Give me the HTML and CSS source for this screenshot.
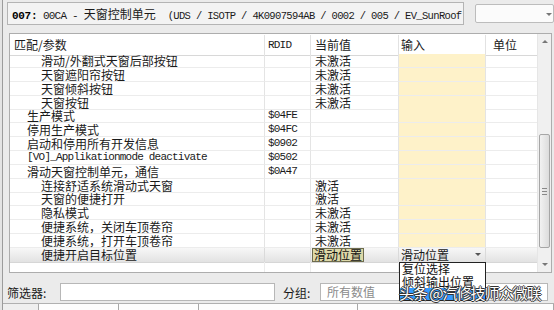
FILE: index.html
```html
<!DOCTYPE html>
<html>
<head>
<meta charset="utf-8">
<link rel="stylesheet" href="styles.css">
</head>
<body>
<div class="win">
  <div class="topbar">
    <div class="title"><b class="lat bold">007:</b><span class="lat"> 00CA - </span>天窗控制单元<span class="lat gap">(UDS / ISOTP / 4K0907594AB / 0002 / 005 / EV_SunRoof</span></div>
    <div class="combo"><span class="arrow"></span></div>
  </div>
  <div class="panel">
    <div class="grid">
      <div class="row head"><div class="c1">匹配/参数</div><div class="c2 lat">RDID</div><div class="c3">当前值</div><div class="c4">输入</div><div class="c5">单位</div></div>
      <div class="row"><div class="c1 l1">滑动/外翻式天窗后部按钮</div><div class="c2"></div><div class="c3">未激活</div><div class="c4 inp"></div><div class="c5"></div></div>
      <div class="row"><div class="c1 l1">天窗遮阳帘按钮</div><div class="c2"></div><div class="c3">未激活</div><div class="c4 inp"></div><div class="c5"></div></div>
      <div class="row"><div class="c1 l1">天窗倾斜按钮</div><div class="c2"></div><div class="c3">未激活</div><div class="c4 inp"></div><div class="c5"></div></div>
      <div class="row"><div class="c1 l1">天窗按钮</div><div class="c2"></div><div class="c3">未激活</div><div class="c4 inp"></div><div class="c5"></div></div>
      <div class="row"><div class="c1 l0">生产模式</div><div class="c2 lat">$04FE</div><div class="c3"></div><div class="c4 inp"></div><div class="c5"></div></div>
      <div class="row"><div class="c1 l0">停用生产模式</div><div class="c2 lat">$04FC</div><div class="c3"></div><div class="c4 inp"></div><div class="c5"></div></div>
      <div class="row"><div class="c1 l0">启动和停用所有开发信息</div><div class="c2 lat">$0902</div><div class="c3"></div><div class="c4 inp"></div><div class="c5"></div></div>
      <div class="row"><div class="c1 l0 lat">[VO]_Applikationmode deactivate</div><div class="c2 lat">$0502</div><div class="c3"></div><div class="c4 inp"></div><div class="c5"></div></div>
      <div class="row"><div class="c1 l0">滑动天窗控制单元，通信</div><div class="c2 lat">$0A47</div><div class="c3"></div><div class="c4 inp"></div><div class="c5"></div></div>
      <div class="row"><div class="c1 l1">连接舒适系统滑动式天窗</div><div class="c2"></div><div class="c3">激活</div><div class="c4 inp"></div><div class="c5"></div></div>
      <div class="row"><div class="c1 l1">天窗的便捷打开</div><div class="c2"></div><div class="c3">激活</div><div class="c4 inp"></div><div class="c5"></div></div>
      <div class="row"><div class="c1 l1">隐私模式</div><div class="c2"></div><div class="c3">未激活</div><div class="c4 inp"></div><div class="c5"></div></div>
      <div class="row"><div class="c1 l1">便捷系统，关闭车顶卷帘</div><div class="c2"></div><div class="c3">未激活</div><div class="c4 inp"></div><div class="c5"></div></div>
      <div class="row"><div class="c1 l1">便捷系统，打开车顶卷帘</div><div class="c2"></div><div class="c3">未激活</div><div class="c4 inp"></div><div class="c5"></div></div>
      <div class="row sel"><div class="c1 l1">便捷开启目标位置</div><div class="c2"></div><div class="c3"><span class="selval">滑动位置</span></div><div class="c4 dd"><span>滑动位置</span><span class="ddarrow"></span></div><div class="c5"></div></div>
      <div class="row filler"><div class="c1"></div><div class="c2"></div><div class="c3"></div><div class="c4"></div><div class="c5"></div></div>
    </div>
    <div class="vscroll">
      <div class="sbtn"><span class="up"></span></div>
      <div class="track1"></div>
      <div class="thumb"><span class="grip"></span></div>
      <div class="track2"></div>
      <div class="sbtn"><span class="down"></span></div>
    </div>
  </div>
  <div class="filterbar">
    <span class="lbl">筛选器:</span>
    <div class="field"></div>
    <span class="lbl2">分组:</span>
    <div class="field group">所有数值</div>
  </div>
  <div class="status">
    <div class="s1"></div><div class="s2"></div><div class="s3"></div><div class="s4"></div><div class="s5"></div>
  </div>
</div>
<div class="popup">
  <div class="item">复位选择</div>
  <div class="item">倾斜输出位置</div>
  <div class="item hl"></div>
</div>
<div class="watermark">头条 @汽修技师众微联</div>
</body>
</html>
```

FILE: styles.css
```css
html, body {
  margin: 0;
  padding: 0;
}
body {
  width: 554px;
  height: 310px;
  overflow: hidden;
  background: #e4e4e4;
  font-family: "Noto Sans CJK SC", sans-serif;
  font-size: 12px;
  color: #1a1a1a;
  position: relative;
}
.lat {
  font-family: "Liberation Mono", "Noto Sans CJK SC", monospace;
  font-size: 11px;
  letter-spacing: -0.8px;
}
.win {
  margin-left: 2px;
  border-left: 1px solid #9c9c9c;
  height: 310px;
  background: #ebebeb;
}
.topbar {
  display: flex;
  height: 33px;
  box-sizing: border-box;
  padding: 2px 0 0 4px;
}
.title {
  width: 461px;
  height: 23px;
  box-sizing: border-box;
  border: 1px solid #b4b4b4;
  background: #f3f3f3;
  line-height: 21px;
  padding-left: 4px;
  white-space: pre;
  overflow: hidden;
}
.title .bold {
  font-weight: bold;
  color: #000;
  letter-spacing: -0.3px;
}
.title .gap {
  margin-left: 12px;
  font-size: 10.5px;
  letter-spacing: -0.65px;
}
.combo {
  margin: 2px 0 0 11px;
  width: 80px;
  height: 19px;
  box-sizing: border-box;
  border: 1px solid #bcbcbc;
  border-radius: 2px;
  background: #fbfbfb;
  position: relative;
}
.combo .arrow {
  position: absolute;
  left: 70px;
  top: 8px;
  border-left: 3px solid transparent;
  border-right: 3px solid transparent;
  border-top: 3px solid #777;
}
.panel {
  margin-left: 6px;
  width: 543px;
  height: 240px;
  box-sizing: border-box;
  border: 1px solid #adadad;
  background: #fff;
  display: flex;
}
.grid {
  width: 527px;
  display: flex;
  flex-direction: column;
}
.row {
  display: grid;
  grid-template-columns: 255px 46px 88px 87px 51px;
  height: 13.85px;
  line-height: 13px;
  white-space: nowrap;
}
.row > div {
  border-right: 1px solid #e4e4e4;
  border-bottom: 1px solid #ececec;
  box-sizing: border-box;
  overflow: visible;
}
.row > div.c5 {
  border-right: none;
}
.row.head {
  height: 20px;
  line-height: 20px;
  padding-top: 1px;
  box-sizing: border-box;
}
.row.head > div {
  border-bottom: 1px solid #d8d8d8;
  border-right: 1px solid #e2e2e2;
}
.row.head > div.c5 { border-right: none; }
.c1 { padding-left: 4px; }
.c1.l0 { padding-left: 17px; }
.c1.l1 { padding-left: 31px; }
.c2 { padding-left: 3px; }
.c3 { padding-left: 4px; }
.c4 { padding-left: 2px; }
.c5 { padding-left: 7px; }
.inp {
  background: #fef2c9;
}
.row.sel {
  background: linear-gradient(#f7f7f7, #e2e2e2);
}
.row.sel > div {
  border-bottom: 1px solid #d6d6d6;
  border-right-color: #dadada;
}
.selval {
  display: inline-block;
  margin-left: -3px;
  padding: 0 1px;
  line-height: 12px;
  background: #ddd8a8;
  border: 1px solid #6e6c4e;
  color: #111;
}
.dd {
  display: flex;
  justify-content: space-between;
  align-items: center;
  padding-right: 4px;
}
.ddarrow {
  border-left: 3px solid transparent;
  border-right: 3px solid transparent;
  border-top: 3px solid #555;
}
.row.filler {
  flex: 1;
}
.row.filler > div {
  border-bottom: none;
  border-right-color: #ececec;
}
.vscroll {
  width: 14px;
  display: flex;
  flex-direction: column;
  background: #f0f0f0;
  border-left: 1px solid #e6e6e6;
  box-sizing: border-box;
}
.sbtn {
  height: 15px;
  display: flex;
  align-items: center;
  justify-content: center;
}
.up {
  border-left: 3px solid transparent;
  border-right: 3px solid transparent;
  border-bottom: 3px solid #777;
}
.down {
  border-left: 3px solid transparent;
  border-right: 3px solid transparent;
  border-top: 3px solid #777;
}
.track1 { height: 85px; }
.thumb {
  height: 114px;
  margin: 0 1px;
  box-sizing: border-box;
  border: 1px solid #a6a6a6;
  border-radius: 2px;
  background: linear-gradient(90deg, #f2f2f2, #dcdcdc);
  display: flex;
  align-items: center;
  justify-content: center;
}
.grip {
  width: 5px;
  height: 5px;
  border-top: 1px solid #888;
  border-bottom: 1px solid #888;
  position: relative;
}
.grip::after {
  content: "";
  position: absolute;
  left: 0;
  right: 0;
  top: 2px;
  border-top: 1px solid #888;
}
.track2 { flex: 1; }
.filterbar {
  display: flex;
  align-items: center;
  margin-top: 10px;
  height: 18px;
  padding-left: 4px;
}
.lbl {
  width: 53px;
}
.lbl2 {
  width: 37px;
  margin-left: 8px;
}
.field {
  width: 215px;
  height: 18px;
  box-sizing: border-box;
  border: 1px solid #b7b7b7;
  background: #fff;
}
.field.group {
  width: 228px;
  padding-left: 6px;
  line-height: 16px;
  color: #8a8a8a;
}
.status {
  margin-top: 2px;
  display: flex;
  height: 8px;
  border-top: 1px solid #b0b0b0;
}
.status > div {
  border-right: 1px solid #a8a8a8;
  background: #fdfdfd;
}
.status > .s1 { width: 35px; background: #efefef; }
.s2 { width: 79px; }
.s3 { width: 79px; }
.s4 { width: 158px; }
.s5 { flex: 1; }
.popup {
  position: absolute;
  left: 399px;
  top: 262px;
  width: 87px;
  height: 39px;
  box-sizing: border-box;
  border: 1px solid #222;
  background: #fff;
}
.item {
  height: 12.5px;
  line-height: 12px;
  padding-left: 2px;
  white-space: nowrap;
  color: #111;
}
.item.hl {
  background: #3399ff;
  height: 12px;
}
.watermark {
  position: absolute;
  left: 399px;
  top: 283px;
  font-size: 15px;
  letter-spacing: -1px;
  line-height: 19px;
  color: #fff;
  white-space: nowrap;
  text-shadow: 1px 0 0 #333, -1px 0 0 #333, 0 1px 0 #333, 0 -1px 0 #333;
}
```
